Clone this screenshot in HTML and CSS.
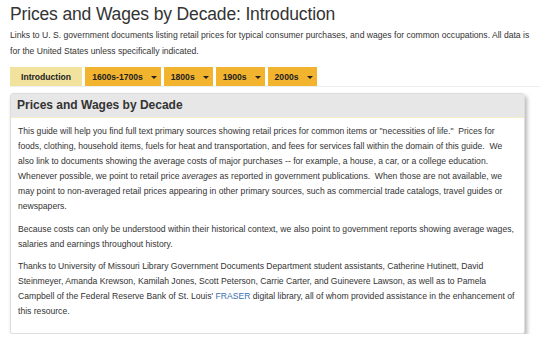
FILE: index.html
```html
<!DOCTYPE html>
<html lang="en">
<head>
    <meta charset="UTF-8">
    <title>Prices and Wages by Decade: Introduction</title>
    <link rel="stylesheet" href="styles.css">
</head>
<body>
    <div class="page">
        <h1 class="page-title">Prices and Wages by Decade: Introduction</h1>
        <p class="guide-desc">Links to U. S. government documents listing retail prices for typical consumer purchases, and wages for common occupations. All data is for the United States unless specifically indicated.</p>

        <ul class="tabs">
            <li class="tab active">Introduction</li>
            <li class="tab">1600s-1700s <span class="caret"></span></li>
            <li class="tab">1800s <span class="caret"></span></li>
            <li class="tab">1900s <span class="caret"></span></li>
            <li class="tab">2000s <span class="caret"></span></li>
        </ul>

        <div class="box">
            <h2 class="box-title">Prices and Wages by Decade</h2>
            <div class="box-body">
                <p>This guide will help you find full text primary sources showing retail prices for common items or "necessities of life."&nbsp; Prices for foods, clothing, household items, fuels for heat and transportation, and fees for services fall within the domain of this guide.&nbsp; We also link to documents showing the average costs of major purchases -- for example, a house, a car, or a college education.&nbsp; Whenever possible, we point to retail price <em>averages</em> as reported in government publications.&nbsp; When those are not available, we may point to non-averaged retail prices appearing in other primary sources, such as commercial trade catalogs, travel guides or newspapers.</p>
                <p>Because costs can only be understood within their historical context, we also point to government reports showing average wages, salaries and earnings throughout history.</p>
                <p>Thanks to University of Missouri Library Government Documents Department student assistants, Catherine Hutinett, David Steinmeyer, Amanda Krewson, Kamilah Jones, Scott Peterson, Carrie Carter, and Guinevere Lawson, as well as to Pamela Campbell of the Federal Reserve Bank of St. Louis' <a href="#">FRASER</a> digital library, all of whom provided assistance in the enhancement of this resource.</p>
            </div>
        </div>
    </div>
</body>
</html>
```

FILE: styles.css
```css
body {
    margin: 0;
    font-family: "Liberation Sans", Arial, sans-serif;
    color: #333;
    background-color: #fff;
}

.page {
    padding: 3px 0 0 10px;
}

.page-title {
    margin: 0;
    font-size: 17.5px;
    font-weight: normal;
    line-height: 22px;
    letter-spacing: -0.15px;
    color: #333;
}

.guide-desc {
    margin: 2px 6px 0 0;
    font-size: 8.6px;
    line-height: 16px;
    color: #333;
}

.tabs {
    display: flex;
    gap: 3px;
    list-style: none;
    margin: 8px 0 0;
    padding: 0;
    border-bottom: 1px solid #eee;
}

.tab {
    display: flex;
    align-items: center;
    height: 19px;
    padding: 0 4px 0 7px;
    background-color: #f2b42e;
    font-size: 8.6px;
    font-weight: bold;
    color: #222;
}

.tab.active {
    padding: 0 11px;
    background-color: #f1e29d;
}

.caret {
    display: inline-block;
    margin: 2px 0 0 8px;
    border-top: 3px solid #222;
    border-left: 3px solid transparent;
    border-right: 3px solid transparent;
}

.box {
    margin: 6px 15px 0 0;
    border: 1px solid #ddd;
    border-radius: 3px;
    box-shadow: 2px 3px 4px rgba(0, 0, 0, 0.3);
}

.box-title {
    margin: 0;
    padding: 4px 6px;
    background-color: #e7e7e7;
    border-bottom: 1px solid #f6ecc8;
    font-size: 12px;
    font-weight: bold;
    line-height: 15px;
    color: #333;
}

.box-body {
    padding: 6px 7px 6px;
    font-size: 8.6px;
    line-height: 15px;
}

.box-body p {
    margin: 0 0 7.5px;
}

.box-body a {
    color: #3a6fb0;
    text-decoration: none;
}
```
